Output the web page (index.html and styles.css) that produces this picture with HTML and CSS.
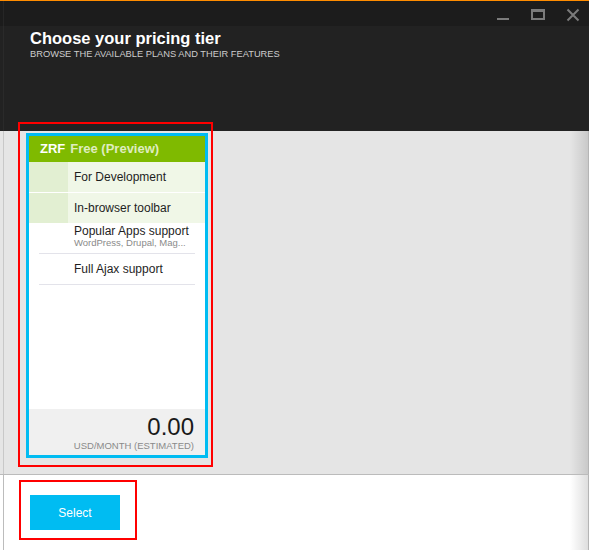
FILE: index.html
```html
<!DOCTYPE html>
<html>
<head>
<meta charset="utf-8">
<title>Choose your pricing tier</title>
<link rel="stylesheet" href="styles.css">
</head>
<body>
<div class="window">
  <header class="header">
    <div class="titlebar">
      <svg class="ctl" width="14" height="14" viewBox="0 0 14 14"><rect x="1" y="10" width="12" height="2" fill="#7b7b7b"/></svg>
      <svg class="ctl" width="14" height="14" viewBox="0 0 14 14"><rect x="1" y="2" width="12" height="9" fill="none" stroke="#7b7b7b" stroke-width="2"/><rect x="0" y="1" width="14" height="3" fill="#7b7b7b"/></svg>
      <svg class="ctl" width="14" height="14" viewBox="0 0 14 14"><path d="M1.5 1.5 L12.5 12.5 M12.5 1.5 L1.5 12.5" stroke="#7b7b7b" stroke-width="2" fill="none"/></svg>
    </div>
    <h1 class="title">Choose your pricing tier</h1>
    <p class="subtitle">BROWSE THE AVAILABLE PLANS AND THEIR FEATURES</p>
  </header>
  <main class="content">
    <div class="tier">
      <div class="tier-head"><span class="tier-code">ZRF</span><span class="tier-name">Free (Preview)</span></div>
      <ul class="features">
        <li class="feature hl"><span class="mark"></span><span class="label">For Development</span></li>
        <li class="feature hl"><span class="mark"></span><span class="label">In-browser toolbar</span></li>
        <li class="feature plain two"><span class="label">Popular Apps support</span><span class="sub">WordPress, Drupal, Mag...</span></li>
        <li class="feature plain"><span class="label">Full Ajax support</span></li>
      </ul>
      <div class="price">
        <div class="amount">0.00</div>
        <div class="unit">USD/MONTH (ESTIMATED)</div>
      </div>
      <div class="annot annot-card"></div>
    </div>
  </main>
  <footer class="footer">
    <button class="select" type="button">Select<span class="annot annot-btn"></span></button>
  </footer>
</div>
</body>
</html>
```
FILE: styles.css
```css
* { box-sizing: border-box; }
html, body { margin: 0; padding: 0; }
body {
  width: 589px;
  height: 550px;
  overflow: hidden;
  font-family: "Liberation Sans", Arial, sans-serif;
  background: #fff;
}
.window { width: 589px; height: 550px; display: flex; flex-direction: column; }

.header {
  height: 131px;
  border-top: 1px solid #ff8c00;
  background:
    linear-gradient(to right, transparent 3px, #2a2a2a 3px, #2a2a2a 4px, transparent 4px),
    #222;
  color: #fff;
}
.titlebar {
  height: 25px;
  background:
    linear-gradient(to right, transparent 3px, #262626 3px, #262626 4px, transparent 4px),
    #1c1c1c;
  display: flex;
  justify-content: flex-end;
  align-items: flex-start;
  gap: 21px;
  padding: 7px 9px 0 0;
}
.ctl { display: block; }
.title {
  margin: 2px 0 0;
  padding-left: 30px;
  font-size: 16.5px;
  line-height: 20px;
  font-weight: bold;
  color: #fff;
}
.subtitle {
  margin: 1px 0 0;
  padding-left: 30px;
  font-size: 9.3px;
  line-height: 11px;
  color: #cdcdcd;
}

.content {
  height: 344px;
  border-bottom: 1px solid #bbb;
  padding: 2px 0 0 26px;
  background:
    linear-gradient(to right, transparent 3px, #c8c8c8 3px, #c8c8c8 4px, transparent 4px),
    linear-gradient(to left, #b5b5b5 1px, rgba(0,0,0,0.12) 1px, rgba(0,0,0,0) 19px),
    #e5e5e5;
}

.tier {
  position: relative;
  width: 182px;
  height: 325px;
  border: 3px solid #00bcf2;
  background: #fff;
  display: flex;
  flex-direction: column;
}
.tier-head {
  height: 26px;
  line-height: 26px;
  background: #7fba00;
  padding-left: 11px;
  font-size: 13px;
  font-weight: bold;
  white-space: nowrap;
}
.tier-code { color: #fff; }
.tier-name { color: rgba(255,255,255,0.76); margin-left: 5px; }

.features { list-style: none; margin: 0; padding: 0; }
.feature { font-size: 12px; color: #1e1e1e; }
.feature.hl {
  display: grid;
  grid-template-columns: 39px 1fr;
  height: 30px;
  line-height: 30px;
  background: #f0f7e7;
}
.feature.hl:first-child { height: 31px; border-bottom: 1px solid #fff; }
.feature.hl .mark { background: #e2efd2; }
.feature.hl .label { padding-left: 6px; }
.feature.plain {
  margin: 0 10px;
  padding-left: 35px;
  height: 31px;
  line-height: 30px;
  border-bottom: 1px solid #e3e3ea;
}
.feature.two {
  display: flex;
  flex-direction: column;
  padding-top: 3px;
  line-height: 11px;
}
.feature .sub {
  display: block;
  font-size: 9.5px;
  line-height: 11px;
  color: #8a8a8a;
  white-space: nowrap;
}

.price {
  margin-top: auto;
  background: #f0f0f0;
  height: 46px;
  padding: 5px 11px 0 0;
  text-align: right;
}
.amount { font-size: 24px; line-height: 26px; color: #1a1a1a; }
.unit { font-size: 9.5px; line-height: 11px; color: #8a8a8a; }

.footer {
  flex: 1;
  padding: 20px 0 0 30px;
  background:
    linear-gradient(to right, transparent 3px, #bcbcbc 3px, #bcbcbc 4px, transparent 4px),
    linear-gradient(to left, #b5b5b5 1px, rgba(0,0,0,0.13) 1px, rgba(0,0,0,0) 19px),
    #fff;
}
.select {
  position: relative;
  width: 90px;
  height: 35px;
  border: none;
  margin: 0;
  padding: 0;
  background: #00bcf2;
  color: #fff;
  font-family: "Liberation Sans", Arial, sans-serif;
  font-size: 12px;
}

.annot {
  position: absolute;
  border: 2px solid #ff0000;
  pointer-events: none;
}
.annot-card { top: -14px; left: -11px; right: -8px; bottom: -12px; }
.annot-btn { top: -15px; left: -11px; right: -17px; bottom: -10px; }
```
